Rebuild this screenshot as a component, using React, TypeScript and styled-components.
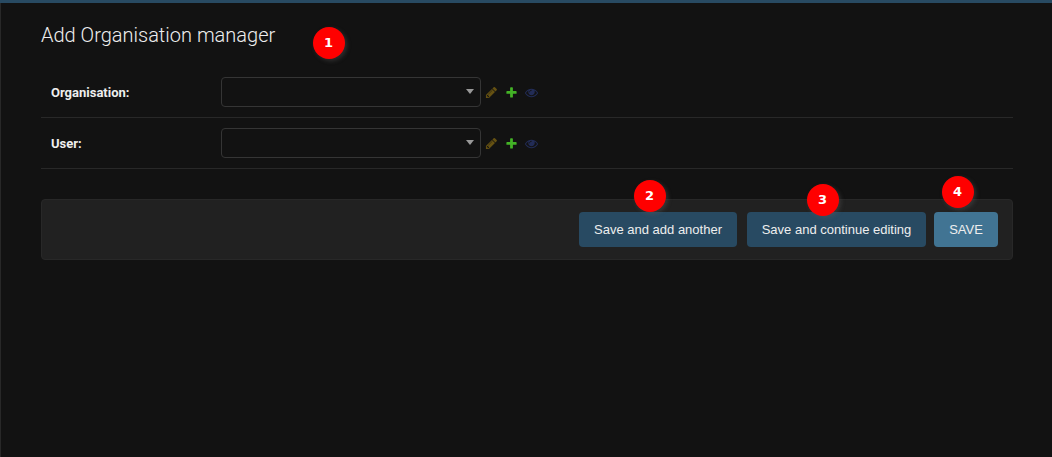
import React from "react";
import styled, { createGlobalStyle } from "styled-components";

const GlobalStyle = createGlobalStyle`
  * { box-sizing: border-box; }
  html, body { margin: 0; padding: 0; background: #121212; overflow: hidden; }
`;

const Page = styled.div`
  position: relative;
  display: flex;
  flex-direction: column;
  height: 100vh;
  background: #121212;
  border-top: 3px solid #284a62;
  color: #eee;
  font-family: Roboto, "Liberation Sans", sans-serif;
  font-size: 13px;
`;

const Main = styled.main`
  flex: 1;
  border-left: 1px solid #282828;
  padding: 20px 39px 0 40px;
`;

const Title = styled.h1`
  margin: 0;
  height: 44px;
  font-size: 20px;
  font-weight: 300;
  line-height: 24px;
`;

const Row = styled.div`
  display: flex;
  align-items: center;
  height: 51px;
  padding-left: 10px;
  border-bottom: 1px solid #282828;
`;

const Label = styled.label`
  width: 170px;
  font-weight: 700;
  line-height: 15px;
`;

const Select = styled.div`
  display: flex;
  align-items: center;
  justify-content: flex-end;
  width: 260px;
  height: 30px;
  padding-right: 6px;
  border: 1px solid #353535;
  border-radius: 4px;
`;

const Arrow = styled.span`
  border: solid transparent;
  border-width: 5px 4px 0;
  border-top-color: #999;
  margin-bottom: 1px;
`;

const Actions = styled.div`
  display: flex;
  gap: 7px;
  margin-left: 4px;
`;

const Icon = styled.svg`
  display: block;
  width: 13px;
  height: 13px;
`;

const SubmitRow = styled.div`
  display: flex;
  justify-content: flex-end;
  margin-top: 30px;
  height: 61px;
  padding: 12px 14px;
  background: #212121;
  border: 1px solid #282828;
  border-radius: 4px;
`;

const Button = styled.button<{ $primary?: boolean; $width: number }>`
  width: ${(p) => p.$width}px;
  height: 35px;
  margin-left: ${(p) => (p.$primary ? 8 : 10)}px;
  padding: 0;
  border: none;
  border-radius: 4px;
  background: ${(p) => (p.$primary ? "#417493" : "#284a62")};
  color: #eee;
  font: 13px "Liberation Sans", Arial, sans-serif;
  white-space: nowrap;
`;

const Badge = styled.span<{ $x: number; $y: number }>`
  position: absolute;
  left: ${(p) => p.$x}px;
  top: ${(p) => p.$y - 3}px;
  width: 32px;
  height: 32px;
  border-radius: 50%;
  background: #f00;
  box-shadow: 2px 2px 4px rgba(90, 90, 90, 0.4);
  color: #fff;
  font: bold 13px/32px "DejaVu Sans", sans-serif;
  text-align: center;
`;

const pencil =
  "M491 1536l91-91-235-235-91 91v107h128v128h107zm523-928q0-22-22-22-10 0-17 7l-542 542q-7 7-7 17 0 22 22 22 10 0 17-7l542-542q7-7 7-17zm-54-192l416 416-832 832h-416v-416zm683 96q0 53-37 90l-166 166-416-416 166-165q36-38 90-38 53 0 91 38l235 234q37 39 37 91z";
const plus =
  "M1600 796v192q0 40-28 68t-68 28h-416v416q0 40-28 68t-68 28h-192q-40 0-68-28t-28-68v-416h-416q-40 0-68-28t-28-68v-192q0-40 28-68t68-28h416v-416q0-40 28-68t68-28h192q40 0 68 28t28 68v416h416q40 0 68 28t28 68z";
const eye =
  "M1664 960q-152-236-381-353 61 104 61 225 0 185-131.5 316.5t-316.5 131.5-316.5-131.5-131.5-316.5q0-121 61-225-229 117-381 353 133 205 333.5 326.5t434.5 121.5 434.5-121.5 333.5-326.5zm-720-384q0-20-14-34t-34-14q-125 0-214.5 89.5t-89.5 214.5q0 20 14 34t34 14 34-14 14-34q0-86 61-147t147-61q20 0 34-14t14-34zm848 384q0 34-20 69-140 230-376.5 368.5t-499.5 138.5-499.5-139-376.5-368q-20-35-20-69t20-69q140-229 376.5-368t499.5-139 499.5 139 376.5 368q20 35 20 69z";

const icons = [
  { path: pencil, color: "#655112" },
  { path: plus, color: "#43b226" },
  { path: eye, color: "#222c56" },
];

const badges = [
  { n: 1, x: 312.5, y: 26.5 },
  { n: 2, x: 633.5, y: 179.5 },
  { n: 3, x: 806.5, y: 183.5 },
  { n: 4, x: 941.5, y: 175.5 },
];

function Field({ label }: { label: string }) {
  return (
    <Row>
      <Label>{label}</Label>
      <Select>
        <Arrow />
      </Select>
      <Actions>
        {icons.map((i) => (
          <Icon key={i.color} viewBox="0 0 1792 1792">
            <path d={i.path} fill={i.color} />
          </Icon>
        ))}
      </Actions>
    </Row>
  );
}

export default function App() {
  return (
    <Page>
      <GlobalStyle />
      <Main>
        <Title>Add Organisation manager</Title>
        <Field label="Organisation:" />
        <Field label="User:" />
        <SubmitRow>
          <Button $width={158}>Save and add another</Button>
          <Button $width={179}>Save and continue editing</Button>
          <Button $width={64} $primary>SAVE</Button>
        </SubmitRow>
      </Main>
      {badges.map((b) => (
        <Badge key={b.n} $x={b.x} $y={b.y}>{b.n}</Badge>
      ))}
    </Page>
  );
}
